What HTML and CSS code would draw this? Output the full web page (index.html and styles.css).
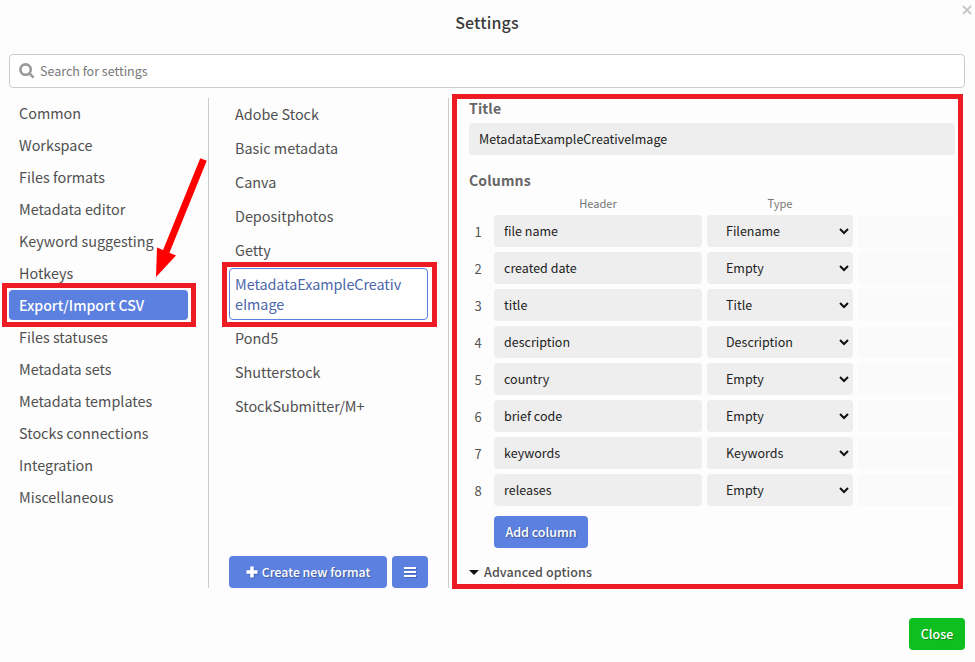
FILE: index.html
```
<!DOCTYPE html>
<html lang="en">
<head>
<meta charset="utf-8">
<title>Settings</title>
<link rel="stylesheet" href="styles.css">
</head>
<body>
<main class="modal">
  <header class="modal-head">
    <h1>Settings</h1>
    <svg class="dismiss" viewBox="0 0 10 10"><path d="M1 1l8 8M9 1l-8 8"/></svg>
  </header>
  <div class="search">
    <svg class="search-icon" viewBox="0 0 16 16"><circle cx="6.6" cy="6.6" r="5.2"/><path d="M10.4 10.4l4.2 4.2"/></svg>
    <span>Search for settings</span>
  </div>
  <div class="body">
    <nav class="sections">
      <a>Common</a><a>Workspace</a><a>Files formats</a><a>Metadata editor</a><a>Keyword suggesting</a><a>Hotkeys</a><a class="active">Export/Import CSV</a><a>Files statuses</a><a>Metadata sets</a><a>Metadata templates</a><a>Stocks connections</a><a>Integration</a><a>Miscellaneous</a>
    </nav>
    <section class="formats">
      <div class="format-list">
        <a>Adobe Stock</a><a>Basic metadata</a><a>Canva</a><a>Depositphotos</a><a>Getty</a><a class="current">MetadataExampleCreativeImage</a><a>Pond5</a><a>Shutterstock</a><a>StockSubmitter/M+</a>
      </div>
      <div class="format-actions">
        <button class="btn create"><svg class="plus" viewBox="0 0 12 12"><path d="M6 0.5v11M0.5 6h11"/></svg><span>Create new format</span></button>
        <button class="btn menu"><svg class="bars" viewBox="0 0 12 12"><path d="M0 2h12M0 6h12M0 10h12"/></svg></button>
      </div>
    </section>
    <section class="editor">
      <h2>Title</h2>
      <div class="field">MetadataExampleCreativeImage</div>
      <h2 class="columns-title">Columns</h2>
      <div class="row labels"><span></span><span>Header</span><span>Type</span><span></span></div>
      <div class="rows">
        <div class="row"><span class="num">1</span><div class="field">file name</div><div class="field select">Filename<svg viewBox="0 0 10 7"><path d="M1 1l4 4 4-4"/></svg></div><div class="field blank"></div></div>
        <div class="row"><span class="num">2</span><div class="field">created date</div><div class="field select">Empty<svg viewBox="0 0 10 7"><path d="M1 1l4 4 4-4"/></svg></div><div class="field blank"></div></div>
        <div class="row"><span class="num">3</span><div class="field">title</div><div class="field select">Title<svg viewBox="0 0 10 7"><path d="M1 1l4 4 4-4"/></svg></div><div class="field blank"></div></div>
        <div class="row"><span class="num">4</span><div class="field">description</div><div class="field select">Description<svg viewBox="0 0 10 7"><path d="M1 1l4 4 4-4"/></svg></div><div class="field blank"></div></div>
        <div class="row"><span class="num">5</span><div class="field">country</div><div class="field select">Empty<svg viewBox="0 0 10 7"><path d="M1 1l4 4 4-4"/></svg></div><div class="field blank"></div></div>
        <div class="row"><span class="num">6</span><div class="field">brief code</div><div class="field select">Empty<svg viewBox="0 0 10 7"><path d="M1 1l4 4 4-4"/></svg></div><div class="field blank"></div></div>
        <div class="row"><span class="num">7</span><div class="field">keywords</div><div class="field select">Keywords<svg viewBox="0 0 10 7"><path d="M1 1l4 4 4-4"/></svg></div><div class="field blank"></div></div>
        <div class="row"><span class="num">8</span><div class="field">releases</div><div class="field select">Empty<svg viewBox="0 0 10 7"><path d="M1 1l4 4 4-4"/></svg></div><div class="field blank"></div></div>
      </div>
      <button class="btn add">Add column</button>
      <div class="advanced"><svg viewBox="0 0 10 5"><path d="M0 0h10L5 5z"/></svg><span>Advanced options</span></div>
    </section>
  </div>
  <footer><button class="btn close">Close</button></footer>
</main>
<div class="mark mark-section"></div>
<div class="mark mark-format"></div>
<div class="mark mark-editor"></div>
<svg class="arrow" viewBox="0 0 60 125"><path d="M48.500 4.500L11 97" class="shaft"/><path d="M1 122L2 92.500L21 100.500z"/></svg>
</body>
</html>
```
FILE: styles.css
```
* { box-sizing: border-box; }
body {
  margin: 0;
  background: #fdfdfd;
  color: #505050;
  font: 14.4px/20px "Noto Sans CJK SC", "Open Sans", sans-serif;
}
.modal { position: relative; height: 662px; padding: 0 10px 12px 9px; display: flex; flex-direction: column; }
.modal-head { height: 54px; padding-top: 12px; text-align: center; }
h1 { margin: 0; font-size: 16px; line-height: 20px; font-weight: 500; color: #3a3a3a; letter-spacing: .15px; }
.dismiss { position: absolute; right: 3px; top: 5px; width: 10px; height: 10px; stroke: #c8c8c8; stroke-width: 2; }
.search { height: 34px; border: 1px solid #ccc; border-radius: 4px; background: #fff; display: flex; align-items: center; padding-left: 8.5px; font-size: 12.5px; color: #777; }
.search-icon { width: 16px; height: 16px; margin-right: 5.5px; fill: none; stroke: #999; stroke-width: 2.6; }
.body { height: 490px; margin-top: 10px; display: flex; }
.sections { width: 200px; padding-right: 20px; border-right: 1px solid #ccc; display: flex; flex-direction: column; gap: 2px; }
.sections a { height: 30px; line-height: 30px; padding-left: 10px; border-radius: 4px; white-space: nowrap; }
.sections .active { background: #5b80e0; color: #fff; font-weight: 500; font-size: 14.1px; }
.formats { width: 240px; padding: 0 20px; border-right: 1px solid #ccc; display: flex; flex-direction: column; justify-content: space-between; }
.format-list { display: flex; flex-direction: column; gap: 2px; }
.format-list a { padding: 5px 5px; border: 1px solid transparent; border-radius: 4px; }
.format-list .current { color: #4c66ab; border-color: #5b80e0; overflow-wrap: anywhere; padding-right: 20px; background: #fff; letter-spacing: -.05px; }
.format-actions { display: flex; gap: 5px; }
.btn { height: 32px; padding: 0; border: 0; border-radius: 4px; background: #5b80e0; color: #fff; font: 500 12.5px/32px "Noto Sans CJK SC", "Open Sans", sans-serif; text-shadow: 1px 1px 1px rgba(0,0,0,.3); display: flex; align-items: center; justify-content: center; }
.btn svg { fill: none; stroke: #fff; filter: drop-shadow(1px 1px 0 rgba(0,0,0,.2)); }
.create { width: 158px; gap: 4px; font-size: 12.3px; }
.plus { width: 12px; height: 12px; stroke-width: 3.4; }
.menu { width: 36px; }
.bars { width: 12px; height: 12px; stroke-width: 2; }
.editor { width: 506px; padding-left: 20px; }
h2 { margin: 0; font-size: 14px; line-height: 20px; font-weight: 700; color: #666; letter-spacing: .15px; }
.editor > .field { margin-top: 5px; }
.field { height: 32px; line-height: 32px; border-radius: 4px; background: #eee; padding-left: 10px; font-size: 12.5px; color: #222; }
.editor .columns-title { margin-top: 15px; }
.row { display: grid; grid-template-columns: 20px 208px 146px 97px; column-gap: 5px; }
.labels { height: 20px; line-height: 20px; margin: 3px 0 2px; text-align: center; font-size: 11.1px; color: #777; }
.rows { display: grid; gap: 5px; }
.num { height: 32px; line-height: 34px; text-align: center; padding-right: 2px; font-size: 13px; color: #555; }
.select { padding: 0 4px 0 19px; display: flex; justify-content: space-between; align-items: center; }
.select svg { width: 10px; height: 7px; fill: none; stroke: #111; stroke-width: 2; }
.blank { background: #fafafa; }
.add { width: 94px; margin: 10px 0 0 25px; }
.advanced { margin-top: 14px; display: flex; align-items: center; gap: 5px; font-size: 12.5px; font-weight: 500; letter-spacing: .1px; }
.advanced svg { width: 10px; height: 5px; fill: #111; }
footer { margin-top: auto; display: flex; justify-content: flex-end; }
.close { width: 56px; background: #0fbf1f; }
.mark { position: absolute; border: 5px solid #ed1c24; }
.mark-section { left: 2px; top: 283px; width: 194px; height: 44px; }
.mark-format { left: 222px; top: 262px; width: 215px; height: 65px; }
.mark-editor { left: 452px; top: 94px; width: 511px; height: 495px; }
.arrow { position: absolute; left: 155px; top: 155px; width: 60px; height: 125px; fill: #f00; }
.shaft { stroke: #f00; stroke-width: 7; }
```
